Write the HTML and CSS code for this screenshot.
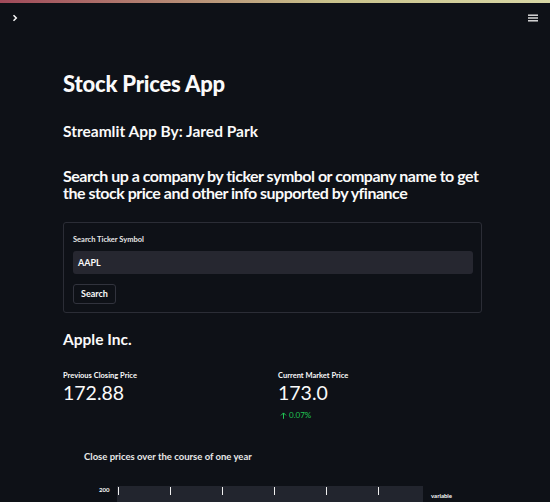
FILE: index.html
```html
<!DOCTYPE html>
<html>
<head>
<meta charset="utf-8">
<link rel="stylesheet" href="styles.css">
</head>
<body>
<div class="decoration"></div>
<header class="topbar">
  <svg class="chev" width="8" height="8" viewBox="0 0 8 8"><path d="M2.5 1.2 L5.3 4 L2.5 6.8" fill="none" stroke="#fafafa" stroke-width="1.5"/></svg>
  <svg class="menu" width="10" height="8" viewBox="0 0 10 8"><rect x="0" y="0.5" width="10" height="1.4" fill="#e6e6e6"/><rect x="0" y="3.3" width="10" height="1.4" fill="#e6e6e6"/><rect x="0" y="6.1" width="10" height="1.4" fill="#e6e6e6"/></svg>
</header>
<main class="main">
  <h1 class="title">Stock Prices App</h1>
  <h3 class="byline">Streamlit App By: Jared Park</h3>
  <h3 class="intro">Search up a company by ticker symbol or company name to get the stock price and other info supported by yfinance</h3>
  <form class="form">
    <label class="label">Search Ticker Symbol</label>
    <div class="input">AAPL</div>
    <div class="btn">Search</div>
  </form>
  <h3 class="company">Apple Inc.</h3>
  <div class="metrics">
    <div class="metric">
      <div class="mlabel">Previous Closing Price</div>
      <div class="mvalue">172.88</div>
    </div>
    <div class="metric">
      <div class="mlabel">Current Market Price</div>
      <div class="mvalue">173.0</div>
      <div class="delta"><svg width="7" height="7" viewBox="0 0 7 7"><path d="M3.5 6.8 V1 M1 3.4 L3.5 0.9 L6 3.4" fill="none" stroke="#21c354" stroke-width="1"/></svg> 0.07%</div>
    </div>
  </div>
  <div class="charttitle">Close prices over the course of one year</div>
  <div class="chart">
    <div class="ylabel">200</div>
    <div class="plot">
      <span class="tick"></span><span class="tick"></span><span class="tick"></span><span class="tick"></span><span class="tick"></span><span class="tick"></span>
    </div>
    <div class="legend">variable</div>
  </div>
</main>
</body>
</html>
```
FILE: styles.css
```css
html, body {
  margin: 0;
  padding: 0;
  background: #0e1117;
  height: 100%;
  overflow: hidden;
}
body {
  font-family: "Lato", "Open Sans", sans-serif;
  color: #fafafa;
  position: relative;
}
.decoration {
  height: 3px;
  background: linear-gradient(90deg, #a04a5a, #c9c28c 60%, #d8d7a6);
}
.topbar {
  display: flex;
  justify-content: space-between;
  align-items: center;
  padding: 11px 12px 0 11px;
  height: 8px;
}
.main {
  padding: 48px 68px 0 63px;
  display: flex;
  flex-direction: column;
}
.title {
  margin: 0;
  font-size: 22px;
  font-weight: 900;
  line-height: 28px;
  letter-spacing: -0.2px;
}
.byline {
  margin: 23px 0 0;
  font-size: 15.5px;
  font-weight: 700;
  line-height: 20px;
}
.intro {
  margin: 26px 0 0;
  font-size: 16px;
  font-weight: 700;
  line-height: 17px;
  letter-spacing: -0.5px;
}
.form {
  margin: 21px 0 0;
  border: 1px solid #2b2d36;
  border-radius: 3px;
  padding: 12px 8px 8px 9px;
  display: flex;
  flex-direction: column;
  align-items: flex-start;
}
.label {
  font-size: 7.5px;
  font-weight: 700;
  line-height: 10px;
  color: #e8e8e8;
}
.input {
  margin-top: 6px;
  align-self: stretch;
  background: #262730;
  border-radius: 3px;
  height: 23px;
  line-height: 23px;
  padding-left: 5px;
  font-size: 9px;
  font-weight: 700;
}
.btn {
  margin-top: 10px;
  border: 1px solid #31333d;
  border-radius: 3px;
  height: 18px;
  line-height: 18px;
  padding: 0 7px;
  font-size: 9px;
  font-weight: 700;
  background: #0e1117;
}
.company {
  margin: 16px 0 0;
  font-size: 15.5px;
  font-weight: 700;
  line-height: 20px;
}
.metrics {
  margin-top: 22px;
  display: grid;
  grid-template-columns: 215px 1fr;
}
.mlabel {
  font-size: 7.5px;
  font-weight: 700;
  line-height: 10px;
}
.mvalue {
  font-size: 19.5px;
  font-weight: 400;
  line-height: 24px;
  margin-top: 0;
}
.delta {
  margin-top: 5px;
  margin-left: 2px;
  color: #21c354;
  font-size: 8px;
  line-height: 10px;
  display: flex;
  align-items: center;
  gap: 2px;
}
.charttitle {
  margin: 31px 0 0 21px;
  font-size: 9.5px;
  font-weight: 700;
  line-height: 12px;
  color: #e8e8e8;
}
.chart {
  margin-top: 23px;
  display: flex;
  align-items: flex-start;
}
.ylabel {
  margin-left: 36px;
  width: 18px;
  font-size: 6px;
  font-weight: 700;
  line-height: 8px;
}
.plot {
  width: 305px;
  height: 30px;
  background: #22252e;
  display: flex;
  gap: 51px;
  padding-left: 1px;
}
.tick {
  width: 1px;
  height: 8px;
  margin-top: 1px;
  background: #f0f0f0;
}
.legend {
  margin: 6px 0 0 8px;
  font-size: 6px;
  font-weight: 700;
  line-height: 8px;
}
```
